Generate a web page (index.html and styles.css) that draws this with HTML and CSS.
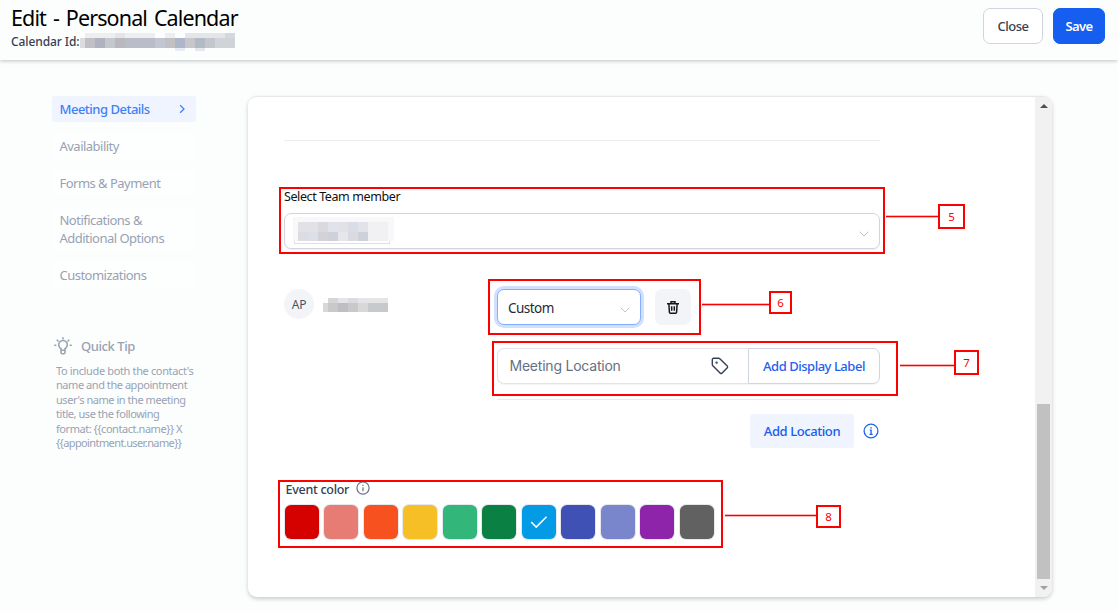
FILE: index.html
```html
<!DOCTYPE html>
<html lang="en">
<head>
<meta charset="utf-8">
<title>Edit - Personal Calendar</title>
<link rel="stylesheet" href="styles.css">
</head>
<body>
<header class="topbar">
  <div class="heading">
    <h1 class="title">Edit - Personal Calendar</h1>
    <div class="cal-id"><span class="cal-id-label">Calendar Id:</span><svg class="mosaic-id" width="155" height="18" shape-rendering="crispEdges">
      <path fill="#eeeef1" d="M5 0h70v5H5zM85 0h10v5H85z"/><path fill="#e4e5e8" d="M35 0h10v5H35zM105 0h40v5h-40z"/><path fill="#d5d8df" d="M145 0h10v5h-10z"/>
      <path fill="#dcdcde" d="M0 5h5v10H0z"/><path fill="#c0c0c6" d="M5 5h10v10H5z"/><path fill="#b0b2bf" d="M15 5h10v10H15z"/><path fill="#c3c8ce" d="M25 5h10v10H25z"/><path fill="#b8b8be" d="M35 5h10v10H35z"/><path fill="#b9bdc8" d="M45 5h30v10H45z"/><path fill="#c1c6d2" d="M75 5h10v10H75z"/><path fill="#c3c0c4" d="M85 5h10v10H85z"/><path fill="#aeb7ca" d="M95 5h10v10H95z"/><path fill="#c7c6ca" d="M105 5h10v10h-10z"/><path fill="#b2bac4" d="M115 5h10v10h-10z"/><path fill="#c3c6cc" d="M125 5h10v10h-10z"/><path fill="#cfd3da" d="M135 5h10v10h-10z"/><path fill="#d1d3d9" d="M145 5h10v10h-10z"/>
      <path fill="#e6ebf5" d="M95 15h10v3H95z"/><path fill="#e4e8ec" d="M115 15h10v3h-10z"/>
    </svg></div>
  </div>
  <div class="actions">
    <button class="btn btn-close">Close</button>
    <button class="btn btn-save">Save</button>
  </div>
</header>

<main class="layout">
  <aside class="sidebar">
    <nav class="nav">
      <a class="nav-item active"><span>Meeting Details</span><svg width="10" height="10" viewBox="0 0 10 10"><path d="M3.2 1.2 7 5 3.2 8.8" fill="none" stroke="#3f80f5" stroke-width="1.3"/></svg></a>
      <a class="nav-item">Availability</a>
      <a class="nav-item">Forms &amp; Payment</a>
      <a class="nav-item">Notifications &amp;<br>Additional Options</a>
      <a class="nav-item">Customizations</a>
    </nav>
    <section class="tip">
      <div class="tip-head">
        <svg width="18" height="18" viewBox="0 0 18 18" fill="none" stroke="#98a2b3" stroke-width="1.6" stroke-linecap="round"><path d="M7 13v-1.400a4.300 4.300 0 1 1 4 0V13M7 13.200h4v2.200a1.300 1.300 0 0 1-1.300 1.300H8.300A1.300 1.300 0 0 1 7 15.400zM9 .8v1M3.200 3.200l.7.7M14.800 3.200l-.7.7M.8 8.200h1M16.200 8.200h1"/></svg>
        <span>Quick Tip</span>
      </div>
      <p class="tip-text"><span class="wide">To include both the contact's</span><br>name and the appointment<br>user's name in the meeting<br>title, use the following<br>format: {{contact.name}} X<br><span class="tight">{{appointment.user.name}}</span></p>
    </section>
  </aside>

  <section class="panel">
    <div class="form">
      <hr class="rule">
      <div class="team-label">Select Team member</div>
      <div class="select team-select">
        <svg class="mosaic-team" width="101" height="28" shape-rendering="crispEdges">
          <path fill="none" stroke="#dcdfe8" d="M1.500 20v6.500h95V20"/><path fill="#f8f8fa" d="M0 0h101v24H0z"/>
          <path fill="#e1e1e6" d="M5 5h20v10H5zM45 5h10v10H45z"/><path fill="#d9dae0" d="M25 5h10v10H25z"/><path fill="#e2e3ea" d="M35 5h10v10H35zM65 5h10v10H65z"/><path fill="#d8dde6" d="M55 5h10v10H55z"/><path fill="#f1f1f4" d="M75 5h20v19H75z"/>
          <path fill="#dedce3" d="M5 15h10v9H5z"/><path fill="#dcdfe8" d="M15 15h10v9H15z"/><path fill="#d2d2d8" d="M25 15h10v9H25z"/><path fill="#cfd1da" d="M35 15h10v9H35zM65 15h10v9H65z"/><path fill="#e6e7ec" d="M45 15h10v9H45z"/><path fill="#dadbe1" d="M55 15h10v9H55z"/>
        </svg>
        <svg class="caret" width="10" height="6" viewBox="0 0 10 6"><path d="M.7.700 5 5 9.300.700" fill="none" stroke="#c0c3c8"/></svg>
      </div>

      <div class="member">
        <div class="person">
          <span class="avatar">AP</span>
          <svg class="mosaic-name" width="65" height="14" shape-rendering="crispEdges"><path fill="#fefef4" d="M0 0h5v5H0z"/><path fill="#d4d6d8" d="M5 0h10v5H5z"/><path fill="#e3e5e7" d="M15 0h50v5H15z"/><path fill="#dcdce0" d="M25 0h10v5H25z"/><path fill="#dad7d5" d="M0 5h5v9H0z"/><path fill="#c8c9ca" d="M5 5h10v9H5zM25 5h10v9H25zM45 5h20v9H45z"/><path fill="#bfbec2" d="M15 5h10v9H15z"/><path fill="#d8d8d9" d="M35 5h10v9H35z"/></svg>
        </div>
        <div class="locations">
          <div class="loc-row">
            <div class="select custom"><span>Custom</span><svg width="10" height="6" viewBox="0 0 10 6"><path d="M.7.700 5 5 9.300.700" fill="none" stroke="#c0c3c8"/></svg></div>
            <button class="trash"><svg width="12" height="13" viewBox="0 0 12 13" fill="none" stroke="#16181d" stroke-width="1.500"><path d="M0 2.750h12M4 2.500V.750h4V2.500M1.900 3l.5 8.300q.1 1 1.100 1h5q1 0 1.100-1L10.100 3M4.700 5.200v4.500M7.300 5.200v4.500"/></svg></button>
          </div>
          <div class="loc-group">
            <div class="loc-input"><span>Meeting Location</span><svg width="18" height="18" viewBox="0 0 18 18" fill="none" stroke="#344054" stroke-width="1.400" stroke-linejoin="round"><path d="M1.300 2.600q0-1.300 1.300-1.300h5q.7 0 1.200.5l7.500 7.300q.7.800 0 1.600l-5.400 5.500q-.8.700-1.600 0L1.800 8.800q-.5-.5-.5-1.200z"/><circle cx="5.600" cy="5.600" r=".5"/></svg></div>
            <button class="display-label">Add Display Label</button>
          </div>
          <hr class="rule">
          <div class="add-row">
            <button class="add-loc">Add Location</button>
            <svg width="16" height="16" viewBox="0 0 16 16" fill="none" stroke="#1f62ec" stroke-width="1.300"><circle cx="8" cy="8" r="6.900"/><path d="M6.800 7.200H8.100v4M6.500 11.300h3.200M7.300 4.900h1.500"/></svg>
          </div>
        </div>
      </div>

      <div class="color-label"><span>Event color</span><svg width="14" height="14" viewBox="0 0 14 14" fill="none" stroke="#667085" stroke-width="1.200"><circle cx="7" cy="7" r="6.100"/><path d="M7 6.200v4M7 3.800v1.200"/></svg></div>
      <div class="swatches">
        <i class="sw red"></i><i class="sw pink"></i><i class="sw orange"></i><i class="sw yellow"></i><i class="sw mint"></i><i class="sw green"></i><i class="sw blue"><svg width="18" height="14" viewBox="0 0 18 14"><path d="M1.200 7 6.200 12 16.500 1.700" fill="none" stroke="#fff" stroke-width="1.600"/></svg></i><i class="sw indigo"></i><i class="sw lavender"></i><i class="sw purple"></i><i class="sw gray"></i>
      </div>
    </div>
    <div class="scrollbar">
      <svg width="8" height="4" viewBox="0 0 8 4"><path d="M0 4 4 0l4 4z" fill="#505050"/></svg>
      <div class="thumb"></div>
      <svg width="8" height="4" viewBox="0 0 8 4"><path d="M0 0l4 4 4-4z" fill="#a0a0a0"/></svg>
    </div>
  </section>
</main>

<!-- numbered callouts over the form -->
<div class="box b5"></div><div class="line l5"></div><div class="num n5">5</div>
<div class="box b6"></div><div class="line l6"></div><div class="num n6">6</div>
<div class="box b7"></div><div class="line l7"></div><div class="num n7">7</div>
<div class="box b8"></div><div class="line l8"></div><div class="num n8">8</div>
</body>
</html>
```
FILE: styles.css
```css
* { box-sizing: border-box; }
body {
  margin: 0;
  width: 1118px;
  height: 611px;
  overflow: hidden;
  position: relative;
  background: #fcfefd;
  font-family: "Noto Sans", "Open Sans", sans-serif;
  font-size: 13px;
  color: #344054;
}
button { font: inherit; padding: 0; margin: 0; }
svg { display: block; flex: none; }
span, button, a { white-space: nowrap; }

.topbar {
  height: 60px;
  display: flex;
  justify-content: space-between;
  padding: 8px 13px 0 11px;
  background: #fcfefd;
  box-shadow: 0 1px 4px rgba(0, 0, 0, .24);
}
.title { margin: -4px 0 0; font-size: 21.5px; line-height: 27px; font-weight: 400; letter-spacing: -.88px; word-spacing: 2.2px; color: #000; white-space: nowrap; }
.cal-id { display: flex; height: 20px; align-items: flex-start; margin-top: 2px; }
.cal-id-label { width: 69px; font-size: 12px; line-height: 17px; font-weight: 500; letter-spacing: -.1px; }
.actions { display: flex; gap: 10px; }
.btn { height: 36px; border-radius: 7px; font-weight: 500; letter-spacing: -.45px; }
.btn-close { width: 60px; border: 1px solid #d0d5dd; background: #fff; color: #344054; }
.btn-save { width: 52px; border: 1px solid #155eef; background: #155eef; color: #fff; font-weight: 600; letter-spacing: -.6px; }

.layout { display: flex; gap: 52px; padding: 36px 0 0 52px; }
.sidebar { width: 144px; }
.nav { display: flex; flex-direction: column; gap: 11px; }
.nav-item {
  display: flex; justify-content: space-between; align-items: center;
  padding: 4px 9px 4px 7.5px;
  line-height: 18px;
  border-radius: 3px;
  background: #fdfefe;
  color: #98a2b3;
  letter-spacing: -.52px;
}
.nav-item.active { background: #eff4ff; color: #3f80f5; font-weight: 500; letter-spacing: -.5px; }
.tip { margin-top: 48px; color: #98a2b3; }
.tip-head { display: flex; align-items: center; gap: 9px; height: 20px; padding-left: 2px; font-weight: 500; letter-spacing: -.42px; }
.tip-text { margin: 8px 0 0 4px; font-size: 11px; line-height: 14.4px; letter-spacing: -.45px; white-space: nowrap; }
.wide { letter-spacing: -.36px; }
.tight { letter-spacing: -.6px; }

.panel {
  width: 804px; height: 501px;
  display: flex;
  overflow: hidden;
  background: #fff;
  border-radius: 9px;
  border-top: 1px solid #e6e8ea;
  box-shadow: 0 2px 4px rgba(0, 0, 0, .2);
}
.form { width: 787px; padding: 43px 155px 0 36px; }
.rule { border: 0; height: 1px; margin: 0; background: #eaebed; }
.team-label { margin-top: 46px; height: 20px; line-height: 20px; font-size: 12.5px; letter-spacing: -.4px; color: #111; white-space: nowrap; }
.select { display: flex; align-items: center; justify-content: space-between; height: 36px; background: #fff; border: 1px solid #d0d5dd; border-radius: 7px; }
.team-select { margin-top: 6px; padding: 0 10px 0 8px; box-shadow: 0 1px 1px rgba(16, 24, 40, .06); }
.mosaic-team { margin-top: -1px; }
.caret { margin-top: 5px; }
.member { display: flex; justify-content: space-between; margin-top: 40px; }
.person { display: flex; align-items: center; gap: 9px; height: 30px; }
.mosaic-name { margin-top: 2px; }
.avatar { width: 30px; height: 30px; border-radius: 50%; background: #f2f4f7; color: #475467; font-size: 12px; line-height: 31px; text-align: center; letter-spacing: -.2px; }
.locations { width: 383px; }
.loc-row { display: flex; gap: 14px; }
.custom { width: 144px; padding: 0 10px; border-color: #84adff; box-shadow: 0 0 0 3px #d1e0ff; font-size: 13.5px; color: #1f2937; }
.custom span { letter-spacing: -.55px; margin-top: 2px; }
.custom svg { margin-top: 6px; }
.trash { display: flex; align-items: center; justify-content: center; width: 36px; height: 36px; border: 0; border-radius: 7px; background: #f2f4f7; }
.loc-group { display: flex; margin-top: 23px; height: 36px; border-radius: 7px; box-shadow: 0 1px 1px rgba(16, 24, 40, .05); }
.loc-input { display: flex; width: 251px; align-items: center; justify-content: space-between; padding: 0 19px 0 11.5px; border: 1px solid #e0e3e7; border-right: 0; border-radius: 7px 0 0 7px; font-family: Inter, sans-serif; font-size: 14px; letter-spacing: -.22px; color: #667085; }
.loc-input span { margin-top: -1px; }
.display-label { width: 132px; border: 1px solid #d0d5dd; border-radius: 0 7px 7px 0; background: #fff; color: #1f62ec; font-weight: 500; letter-spacing: -.48px; }
.locations .rule { margin-top: 15px; }
.add-row { display: flex; justify-content: flex-end; align-items: center; gap: 9px; margin-top: 14px; padding-right: 1px; }
.add-loc { width: 104px; height: 34px; border: 0; border-radius: 3px; background: #eff4ff; color: #155eef; font-weight: 500; letter-spacing: -.42px; }
.color-label { display: flex; align-items: center; gap: 7px; margin-top: 31px; height: 20px; padding-left: 1.5px; font-size: 12.5px; font-weight: 500; letter-spacing: -.28px; }
.color-label svg { margin-top: -2px; }
.swatches { display: flex; gap: 5.5px; margin: 6px 0 0 .9px; }
.sw { flex: none; display: flex; align-items: center; justify-content: center; width: 34px; height: 34px; border-radius: 6px; box-shadow: 0 0 0 1px #e6e8ee; }
.red { background: #d50000; }
.pink { background: #e67c73; }
.orange { background: #f6511e; }
.yellow { background: #f6bf26; }
.mint { background: #33b679; }
.green { background: #0b8043; }
.blue { background: #039be5; }
.indigo { background: #3f51b5; }
.lavender { background: #7986cb; }
.purple { background: #8e24aa; }
.gray { background: #616161; }

.scrollbar { width: 17px; display: flex; flex-direction: column; align-items: center; background: #f1f1f1; padding: 7px 0 7px; }
.thumb { width: 13px; height: 175px; margin: auto 0 7px; background: #c1c1c1; }

.box, .line, .num { position: absolute; }
.box, .num { border: 2px solid #ff0000; }
.line { height: 3px; background: #f80000; border: solid #ffb4b4; border-width: 1px 0; }
.num { background: #fff; color: #ff0000; font-size: 11.5px; display: flex; align-items: center; justify-content: center; }
.b5 { left: 279px; top: 187px; width: 606px; height: 67px; }
.l5 { left: 886px; top: 215px; width: 52px; }
.n5 { left: 938px; top: 204px; width: 27px; height: 25px; }
.b6 { left: 488px; top: 279px; width: 213px; height: 56px; }
.l6 { left: 702px; top: 303px; width: 67px; }
.n6 { left: 769px; top: 291px; width: 23px; height: 23px; }
.b7 { left: 492px; top: 341px; width: 406px; height: 55px; }
.l7 { left: 900px; top: 364px; width: 54px; }
.n7 { left: 954px; top: 350px; width: 25px; height: 25px; }
.b8 { left: 278px; top: 480px; width: 445px; height: 68px; }
.l8 { left: 725px; top: 514px; width: 91px; }
.n8 { left: 816px; top: 505px; width: 25px; height: 23px; }
```
